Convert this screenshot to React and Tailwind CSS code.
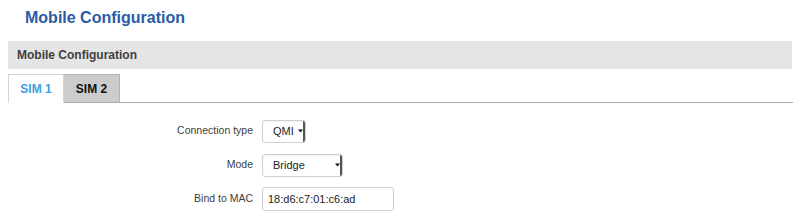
import React from 'react';

const Select = ({ value, width }) => (
  <div
    className={`${width} h-[23px] flex items-center justify-between bg-white border border-[#cfcfcf] rounded-[3px] shadow-[inset_0_1px_2px_rgba(0,0,0,0.06)] text-[11px] text-[#222]`}
  >
    <span className="pl-[10px]">{value}</span>
    <span className="h-full w-[7px] flex items-center justify-center border-r-2 border-[#555] rounded-r-[2px]">
      <svg width="5" height="4" viewBox="0 0 5 4">
        <path d="M0 0.5h5L2.5 3.5z" fill="#111" />
      </svg>
    </span>
  </div>
);

const Row = ({ label, children }) => (
  <div className="flex items-center h-[34px]">
    <label className="w-[254px] pr-[9px] text-right text-[10.5px] text-[#404040]">{label}</label>
    {children}
  </div>
);

export default function App() {
  return (
    <div className="w-[800px] h-[215px] overflow-hidden bg-white px-2 font-['Liberation_Sans',Arial,sans-serif]">
      <h2 className="h-[41px] pl-[17px] pt-[6px] text-[16px] font-bold text-[#2a5ba5]">
        Mobile Configuration
      </h2>
      <div className="w-[784px] h-[28px] flex items-center pl-[9px] bg-[#e5e5e5] text-[12px] font-bold text-[#404040]">
        Mobile Configuration
      </div>
      <div className="w-[785px] mt-[5px] h-[29px] flex border-b border-[#aaaaaa]">
        <div className="w-[56px] h-[29px] -mb-px flex items-center justify-center bg-white border border-b-0 border-[#d4d4d4] text-[12px] font-bold text-[#3d9fe3]">
          SIM 1
        </div>
        <div className="w-[56px] h-[28px] flex items-center justify-center bg-[#cccccc] border border-b-0 border-l-0 border-[#b3b3b3] text-[12px] font-bold text-[#111]">
          SIM 2
        </div>
      </div>
      <div className="pt-[11px]">
        <Row label="Connection type">
          <Select value="QMI" width="w-[44px]" />
        </Row>
        <Row label="Mode">
          <Select value="Bridge" width="w-[81px]" />
        </Row>
        <Row label="Bind to MAC">
          <input
            readOnly
            value="18:d6:c7:01:c6:ad"
            className="w-[132px] h-[24px] px-[5px] bg-white border border-[#cfcfcf] rounded-[3px] text-[11px] text-[#222] outline-none"
          />
        </Row>
      </div>
    </div>
  );
}
